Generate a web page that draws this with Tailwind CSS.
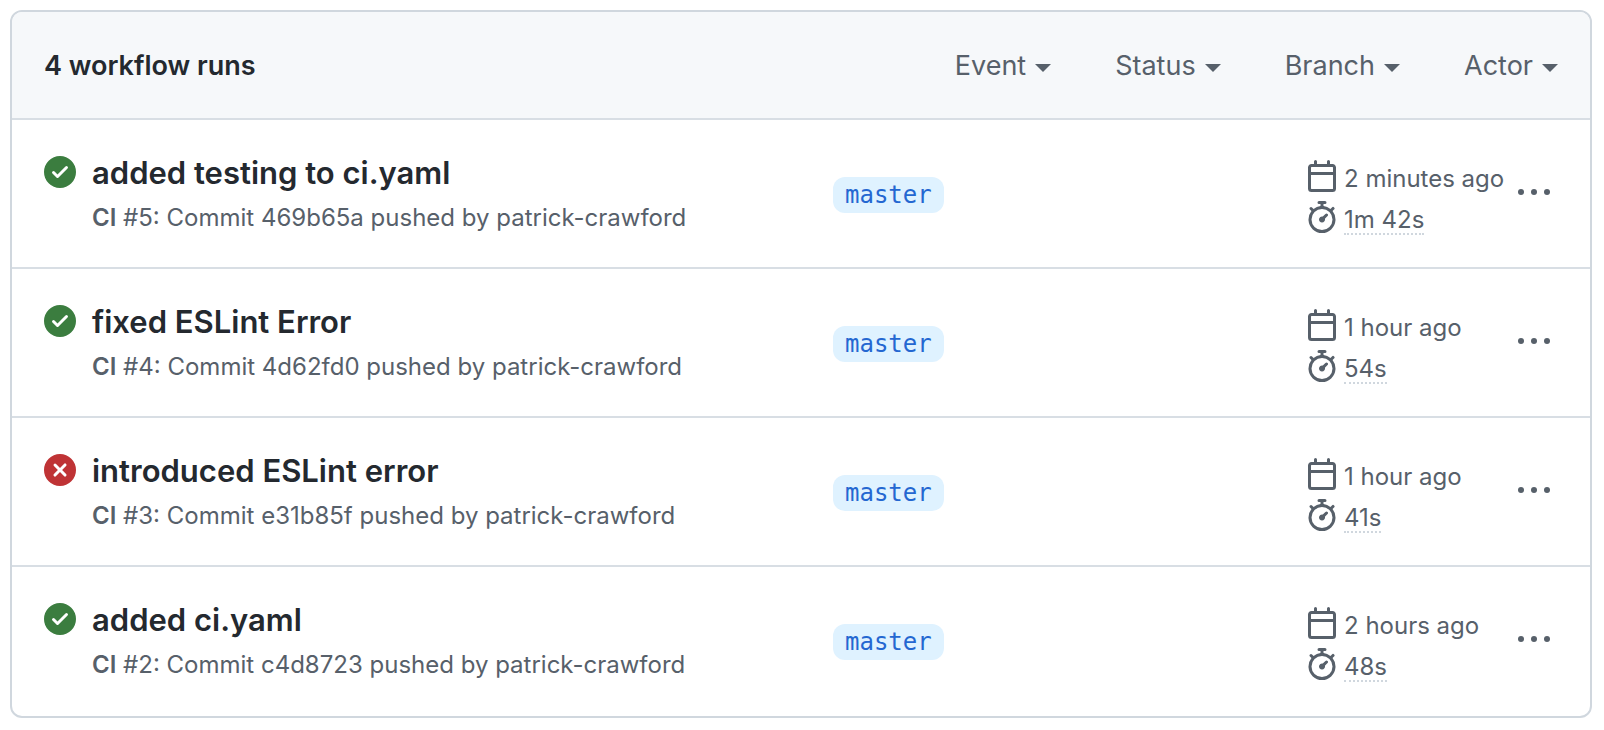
<!DOCTYPE html>
<html lang="en">
<head>
<meta charset="utf-8">
<meta name="viewport" content="width=device-width, initial-scale=1">
<title>Workflow runs</title>
<script src="https://cdn.jsdelivr.net/npm/@tailwindcss/browser@4"></script>
</head>
<body class="bg-white font-['Inter','Liberation_Sans',sans-serif] text-[#24292f]">
<svg class="hidden" aria-hidden="true">
  <symbol id="check" viewBox="0 0 16 16"><path fill-rule="evenodd" d="M8 16A8 8 0 108 0a8 8 0 000 16zm3.78-9.72a.75.75 0 00-1.06-1.06L6.75 9.19 5.28 7.72a.75.75 0 00-1.06 1.06l2 2a.75.75 0 001.06 0l4.5-4.5z"/></symbol>
  <symbol id="fail" viewBox="0 0 16 16"><path fill-rule="evenodd" d="M8 16A8 8 0 108 0a8 8 0 000 16zM6.03 4.97a.75.75 0 00-1.06 1.06L6.94 8 4.97 9.97a.75.75 0 101.06 1.06L8 9.06l1.97 1.97a.75.75 0 101.06-1.06L9.06 8l1.97-1.97a.75.75 0 10-1.06-1.06L8 6.94 6.03 4.97z"/></symbol>
  <symbol id="calendar" viewBox="0 0 16 16"><path fill-rule="evenodd" d="M4.75 0a.75.75 0 01.75.75V2h5V.75a.75.75 0 011.5 0V2h1.25c.966 0 1.75.784 1.75 1.75v10.5A1.75 1.75 0 0113.25 16H2.75A1.75 1.75 0 011 14.25V3.75C1 2.784 1.784 2 2.75 2H4V.75A.75.75 0 014.75 0zm0 3.5h-2a.25.25 0 00-.25.25V6h11V3.75a.25.25 0 00-.25-.25h-8.500zm-2.250 4v6.750c0 .138.112.25.25.25h10.500a.25.25 0 00.25-.25V7.500h-11z"/></symbol>
  <symbol id="stopwatch" viewBox="0 0 16 16"><path fill-rule="evenodd" d="M5.75.75A.75.75 0 016.5 0h3a.75.75 0 010 1.500h-.75v1l-.001.041a6.718 6.718 0 013.464 1.435l.007-.006.75-.75a.75.75 0 111.060 1.060l-.75.75-.006.007a6.750 6.750 0 11-10.548 0L2.720 5.030l-.75-.75a.75.75 0 011.060-1.060l.75.75.007.006A6.718 6.718 0 017.250 2.541a.756.756 0 010-.041v-1H6.500a.75.75 0 01-.75-.75zM8 14.500A5.250 5.250 0 108 4a5.250 5.250 0 000 10.500zm.389-6.700l1.330-1.330a.75.75 0 111.061 1.060L9.450 8.861A1.502 1.502 0 018 10.750a1.500 1.500 0 11.389-2.950z"/></symbol>
  <symbol id="kebab" viewBox="0 0 16 16"><circle cx="1.500" cy="8" r="1.500"/><circle cx="8" cy="8" r="1.500"/><circle cx="14.500" cy="8" r="1.500"/></symbol>
</svg>
<main class="mt-2.5 mr-3 mb-3 ml-2.5 overflow-hidden rounded-xl border-2 border-[#d0d7de]">
  <header class="flex h-[106px] items-center justify-between bg-[#f6f8fa] px-8 pt-0.5">
    <h1 class="text-[27px] font-semibold">4 workflow runs</h1>
    <div class="flex gap-16 text-[27px] text-[#57606a]">
      <button type="button" aria-haspopup="menu" class="flex items-center gap-[9px]">Event <span class="mt-1 border-x-8 border-t-8 border-x-transparent border-t-[#57606a]"></span></button>
      <button type="button" aria-haspopup="menu" class="flex items-center gap-[9px]">Status <span class="mt-1 border-x-8 border-t-8 border-x-transparent border-t-[#57606a]"></span></button>
      <button type="button" aria-haspopup="menu" class="flex items-center gap-[9px]">Branch <span class="mt-1 border-x-8 border-t-8 border-x-transparent border-t-[#57606a]"></span></button>
      <button type="button" aria-haspopup="menu" class="flex items-center gap-[9px]">Actor <span class="mt-1 border-x-8 border-t-8 border-x-transparent border-t-[#57606a]"></span></button>
    </div>
  </header>
  <ul>
    <li class="grid grid-cols-[789fr_473fr_212px_32px] border-t-2 border-[#d8dee4] pt-8 pr-10 pb-8 pl-8">
      <div class="flex gap-4">
        <svg class="mt-1 size-8 shrink-0 fill-[#3b7d3f]" role="img" aria-label="Succeeded"><use href="#check"/></svg>
        <div>
          <a href="#run-5" class="block text-[31px] leading-[42px] font-semibold">added testing to ci.yaml</a>
          <p class="mt-[7px] text-[24px] leading-[34px] text-[#57606a]"><b class="font-semibold">CI</b> #5: Commit 469b65a pushed by patrick-crawford</p>
        </div>
      </div>
      <div class="pt-[25px]"><a href="#master" class="inline-block rounded-xl bg-[#dff2ff] px-3 font-['DejaVu_Sans_Mono',monospace] text-[24px] leading-9 text-[#2467d1]">master</a></div>
      <div class="flex flex-col items-start gap-1.5 pt-2 text-[24px] whitespace-nowrap text-[#57606a]">
        <div class="flex gap-1.5"><svg class="size-8 fill-current" aria-hidden="true"><use href="#calendar"/></svg><span class="pt-[3px] leading-8">2 minutes ago</span></div>
        <div class="flex gap-1.5"><svg class="size-8 fill-current" aria-hidden="true"><use href="#stopwatch"/></svg><a href="#usage-5" class="border-b-2 border-dotted border-[#d0d7de] pt-1.5 leading-[26px]">1m 42s</a></div>
      </div>
      <button type="button" aria-label="Show options" class="mt-6 size-8 text-[#57606a]"><svg class="size-8 fill-current"><use href="#kebab"/></svg></button>
    </li>
    <li class="grid grid-cols-[789fr_473fr_212px_32px] border-t-2 border-[#d8dee4] pt-8 pr-10 pb-8 pl-8">
      <div class="flex gap-4">
        <svg class="mt-1 size-8 shrink-0 fill-[#3b7d3f]" role="img" aria-label="Succeeded"><use href="#check"/></svg>
        <div>
          <a href="#run-4" class="block text-[31px] leading-[42px] font-semibold">fixed ESLint Error</a>
          <p class="mt-[7px] text-[24px] leading-[34px] text-[#57606a]"><b class="font-semibold">CI</b> #4: Commit 4d62fd0 pushed by patrick-crawford</p>
        </div>
      </div>
      <div class="pt-[25px]"><a href="#master" class="inline-block rounded-xl bg-[#dff2ff] px-3 font-['DejaVu_Sans_Mono',monospace] text-[24px] leading-9 text-[#2467d1]">master</a></div>
      <div class="flex flex-col items-start gap-1.5 pt-2 text-[24px] whitespace-nowrap text-[#57606a]">
        <div class="flex gap-1.5"><svg class="size-8 fill-current" aria-hidden="true"><use href="#calendar"/></svg><span class="pt-[3px] leading-8">1 hour ago</span></div>
        <div class="flex gap-1.5"><svg class="size-8 fill-current" aria-hidden="true"><use href="#stopwatch"/></svg><a href="#usage-4" class="border-b-2 border-dotted border-[#d0d7de] pt-1.5 leading-[26px]">54s</a></div>
      </div>
      <button type="button" aria-label="Show options" class="mt-6 size-8 text-[#57606a]"><svg class="size-8 fill-current"><use href="#kebab"/></svg></button>
    </li>
    <li class="grid grid-cols-[789fr_473fr_212px_32px] border-t-2 border-[#d8dee4] pt-8 pr-10 pb-8 pl-8">
      <div class="flex gap-4">
        <svg class="mt-1 size-8 shrink-0 fill-[#bf3335]" role="img" aria-label="Failed"><use href="#fail"/></svg>
        <div>
          <a href="#run-3" class="block text-[31px] leading-[42px] font-semibold">introduced ESLint error</a>
          <p class="mt-[7px] text-[24px] leading-[34px] text-[#57606a]"><b class="font-semibold">CI</b> #3: Commit e31b85f pushed by patrick-crawford</p>
        </div>
      </div>
      <div class="pt-[25px]"><a href="#master" class="inline-block rounded-xl bg-[#dff2ff] px-3 font-['DejaVu_Sans_Mono',monospace] text-[24px] leading-9 text-[#2467d1]">master</a></div>
      <div class="flex flex-col items-start gap-1.5 pt-2 text-[24px] whitespace-nowrap text-[#57606a]">
        <div class="flex gap-1.5"><svg class="size-8 fill-current" aria-hidden="true"><use href="#calendar"/></svg><span class="pt-[3px] leading-8">1 hour ago</span></div>
        <div class="flex gap-1.5"><svg class="size-8 fill-current" aria-hidden="true"><use href="#stopwatch"/></svg><a href="#usage-3" class="border-b-2 border-dotted border-[#d0d7de] pt-1.5 leading-[26px]">41s</a></div>
      </div>
      <button type="button" aria-label="Show options" class="mt-6 size-8 text-[#57606a]"><svg class="size-8 fill-current"><use href="#kebab"/></svg></button>
    </li>
    <li class="grid grid-cols-[789fr_473fr_212px_32px] border-t-2 border-[#d8dee4] pt-8 pr-10 pb-[34px] pl-8">
      <div class="flex gap-4">
        <svg class="mt-1 size-8 shrink-0 fill-[#3b7d3f]" role="img" aria-label="Succeeded"><use href="#check"/></svg>
        <div>
          <a href="#run-2" class="block text-[31px] leading-[42px] font-semibold">added ci.yaml</a>
          <p class="mt-[7px] text-[24px] leading-[34px] text-[#57606a]"><b class="font-semibold">CI</b> #2: Commit c4d8723 pushed by patrick-crawford</p>
        </div>
      </div>
      <div class="pt-[25px]"><a href="#master" class="inline-block rounded-xl bg-[#dff2ff] px-3 font-['DejaVu_Sans_Mono',monospace] text-[24px] leading-9 text-[#2467d1]">master</a></div>
      <div class="flex flex-col items-start gap-1.5 pt-2 text-[24px] whitespace-nowrap text-[#57606a]">
        <div class="flex gap-1.5"><svg class="size-8 fill-current" aria-hidden="true"><use href="#calendar"/></svg><span class="pt-[3px] leading-8">2 hours ago</span></div>
        <div class="flex gap-1.5"><svg class="size-8 fill-current" aria-hidden="true"><use href="#stopwatch"/></svg><a href="#usage-2" class="border-b-2 border-dotted border-[#d0d7de] pt-1.5 leading-[26px]">48s</a></div>
      </div>
      <button type="button" aria-label="Show options" class="mt-6 size-8 text-[#57606a]"><svg class="size-8 fill-current"><use href="#kebab"/></svg></button>
    </li>
  </ul>
</main>
</body>
</html>
